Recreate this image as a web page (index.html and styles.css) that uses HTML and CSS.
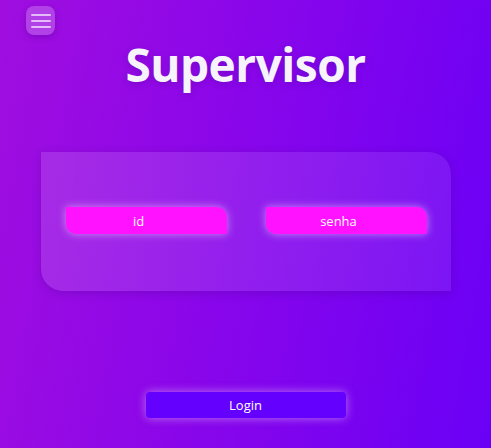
FILE: index.html
```html
<!DOCTYPE html>
<html lang="pt">
<head>
<meta charset="utf-8">
<title>Supervisor</title>
<link rel="stylesheet" href="styles.css">
</head>
<body>
<div class="page">
  <header class="topbar">
    <button class="menu-btn" aria-label="menu">
      <span class="bar"></span>
      <span class="bar"></span>
      <span class="bar"></span>
    </button>
  </header>
  <h1 class="title">Supervisor</h1>
  <section class="card">
    <div class="field">id</div>
    <div class="field">senha</div>
  </section>
  <div class="actions">
    <button class="login">Login</button>
  </div>
</div>
</body>
</html>
```
FILE: styles.css
```css
* { box-sizing: border-box; }
html, body { margin: 0; padding: 0; }
body {
  width: 491px;
  height: 448px;
  overflow: hidden;
  font-family: "Open Sans", "Noto Sans", sans-serif;
  background: linear-gradient(100deg, #a00edf 0%, #8a06ea 45%, #6a00f6 100%);
  color: #fff;
}
.page {
  display: flex;
  flex-direction: column;
  height: 448px;
}
.topbar {
  display: flex;
  padding: 6px 0 0 26px;
}
.menu-btn {
  width: 29px;
  height: 29px;
  border: none;
  border-radius: 8px;
  background: rgba(255, 255, 255, 0.22);
  box-shadow: 0 2px 6px rgba(60, 0, 120, 0.3);
  display: flex;
  flex-direction: column;
  justify-content: center;
  align-items: center;
  gap: 4px;
  padding: 0;
}
.bar {
  display: block;
  width: 20px;
  height: 2px;
  background: rgba(255, 255, 255, 0.65);
  border-radius: 1px;
}
.title {
  margin: -3px 0 0;
  text-align: center;
  font-size: 46px;
  font-weight: 700;
  line-height: 64px;
  color: #f6f4fa;
  letter-spacing: -0.5px;
  text-shadow: 0 2px 6px rgba(60, 0, 120, 0.25);
}
.card {
  margin: 56px 0 0 41px;
  width: 410px;
  height: 139px;
  border-radius: 0 22px 0 22px;
  background: linear-gradient(100deg, rgba(255,255,255,0.13), rgba(255,255,255,0.08));
  box-shadow: 0 2px 8px rgba(60, 0, 120, 0.25);
  display: flex;
  justify-content: space-between;
  align-items: center;
  padding: 0 24px 2px 25px;
}
.field {
  width: 161px;
  height: 27px;
  background: #ff12ff;
  border-radius: 0 10px 0 10px;
  box-shadow: 0 0 8px rgba(255, 220, 255, 0.55);
  display: flex;
  justify-content: center;
  align-items: center;
  padding: 1px 16px 0 0;
  font-size: 13px;
  color: #fff;
}
.actions {
  display: flex;
  justify-content: center;
  margin-top: 101px;
}
.login {
  width: 200px;
  height: 26px;
  border: none;
  border-radius: 4px;
  background: #6400fe;
  box-shadow: 0 0 10px rgba(230, 200, 255, 0.55);
  color: #fff;
  font-family: "Open Sans", "Noto Sans", sans-serif;
  font-size: 13px;
  padding: 0;
}
```
